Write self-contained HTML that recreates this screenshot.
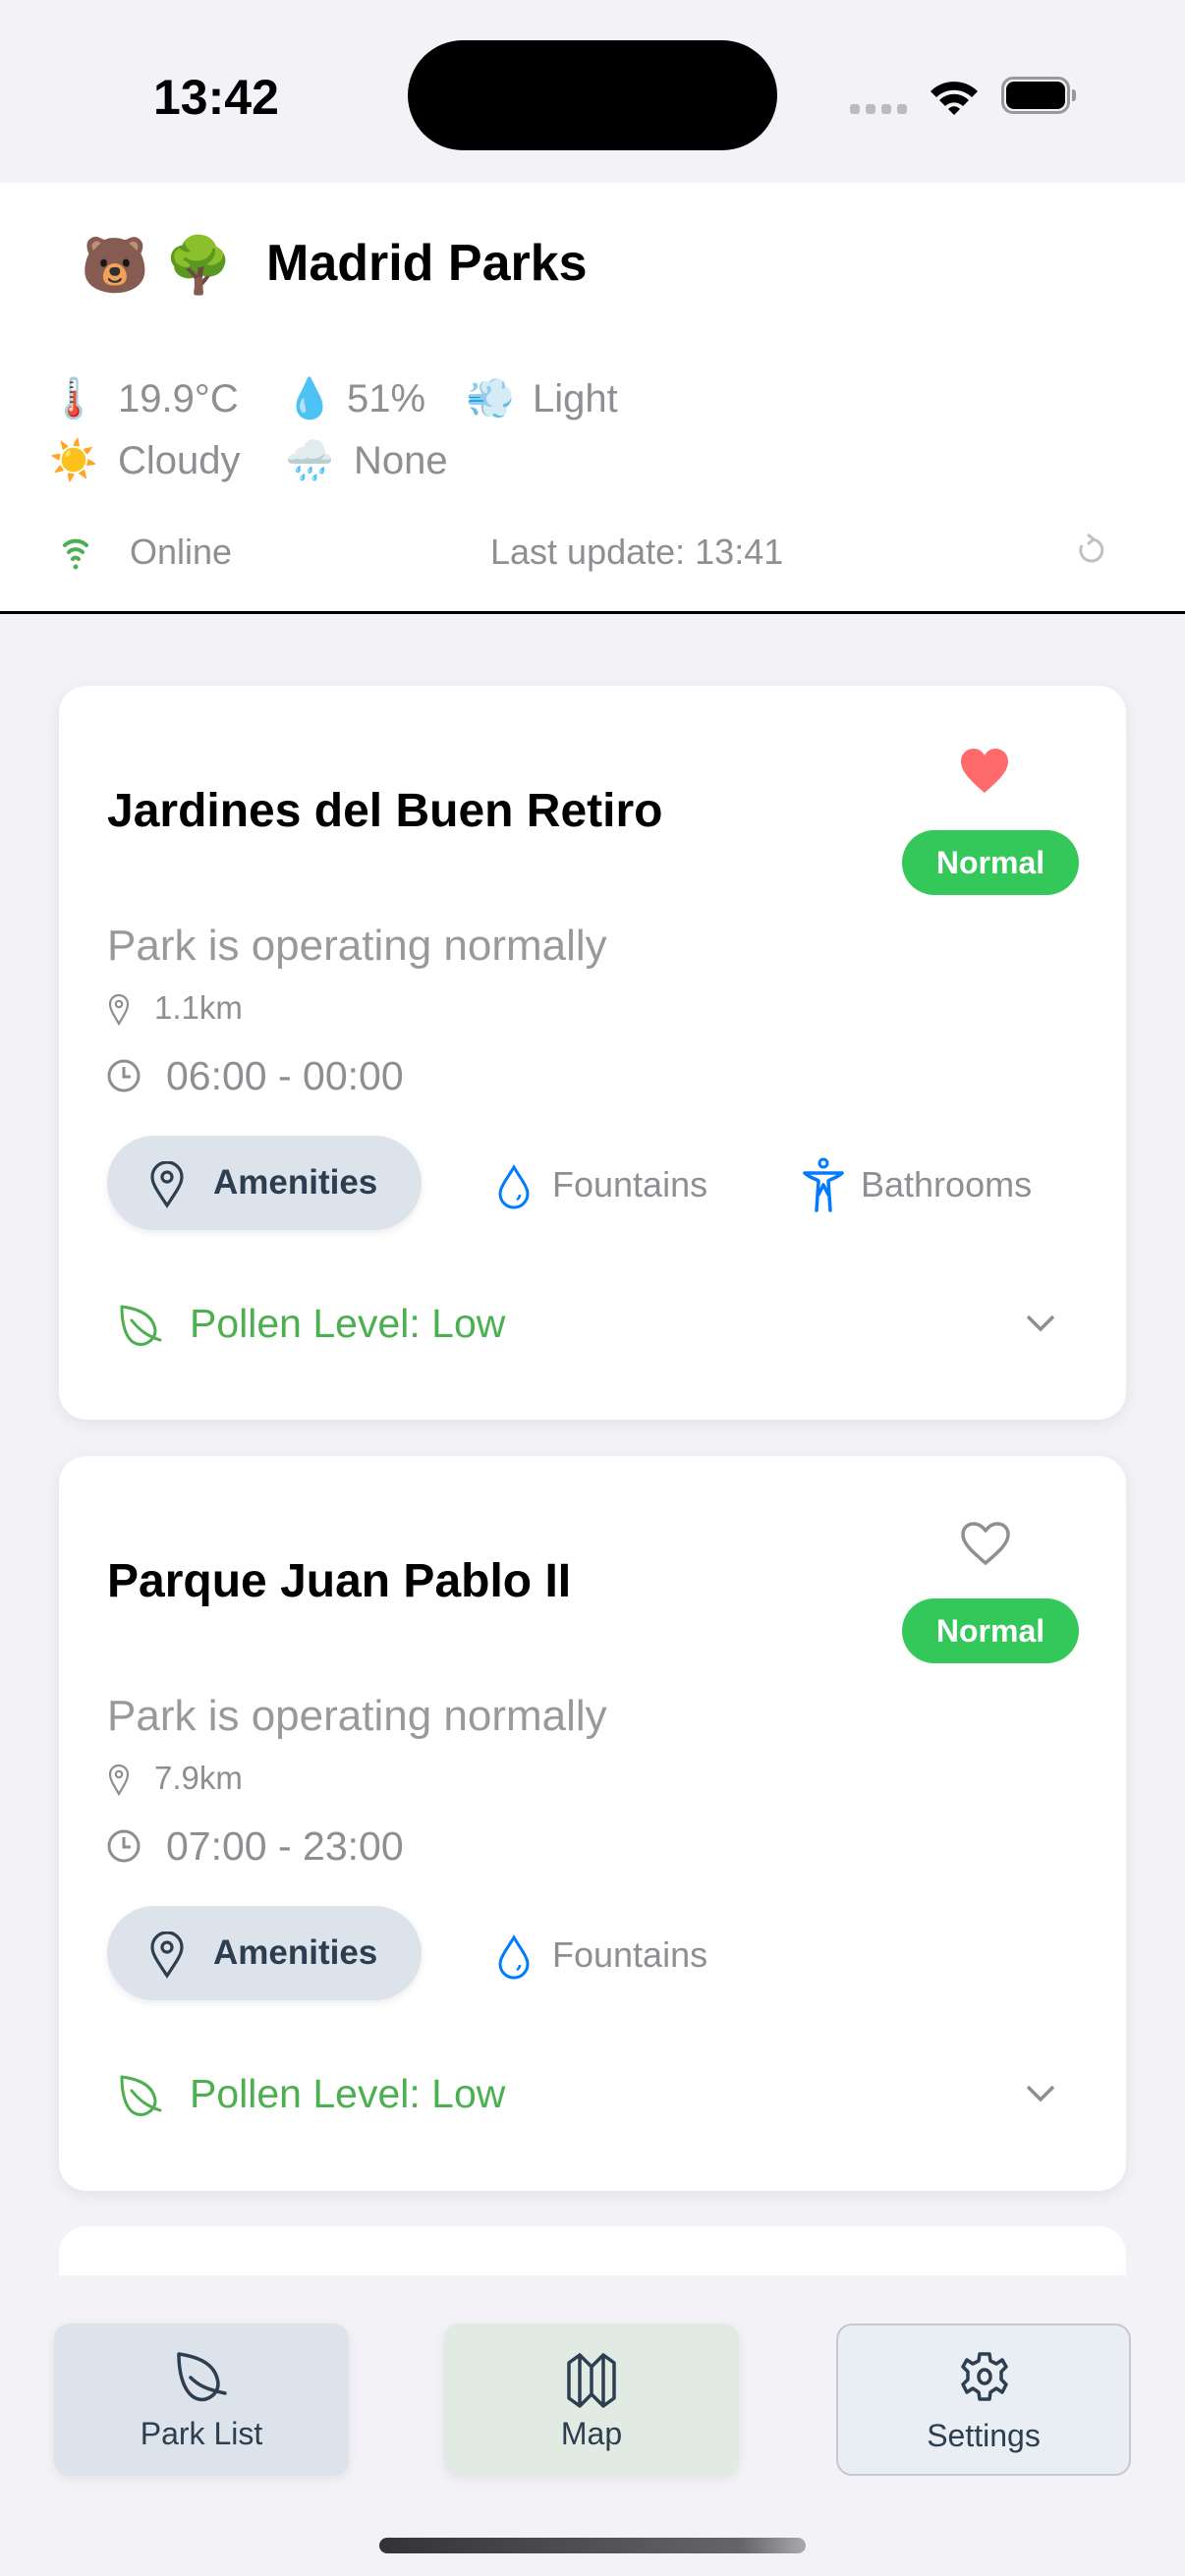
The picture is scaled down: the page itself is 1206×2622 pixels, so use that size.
<!DOCTYPE html>
<html><head><meta charset="utf-8">
<style>
*{margin:0;padding:0;box-sizing:border-box}
body{width:1206px;height:2622px;background:#f2f2f7;font-family:"Liberation Sans","DejaVu Sans",sans-serif;position:relative;overflow:hidden}
.a{position:absolute;white-space:nowrap}
.card{position:absolute;left:60px;width:1086px;background:#fff;border-radius:28px;box-shadow:0 4px 16px rgba(0,0,0,0.07)}
.gray{color:#8e8e93}
.badge{position:absolute;left:858px;width:180px;height:66px;border-radius:33px;background:#34c759;color:#fff;font-weight:bold;font-size:32px;text-align:center;line-height:66px}
.pill{position:absolute;left:49px;width:320px;height:96px;border-radius:48px;background:#dde3ea;box-shadow:0 3px 8px rgba(0,0,0,0.08)}
.tab{position:absolute;top:2365px;width:300px;height:155px;border-radius:16px;box-shadow:0 3px 10px rgba(0,0,0,0.07)}
.tab span{position:absolute;left:0;right:0;top:94px;text-align:center;font-size:32px;color:#2c3e50}
.w{position:absolute;white-space:nowrap;font-size:40px;line-height:48px;color:#8e8e93}
</style></head><body>
<!-- status bar -->
<div class="a" style="left:156px;top:70px;font-size:50px;font-weight:bold;color:#000">13:42</div>
<div class="a" style="left:415px;top:41px;width:376px;height:112px;background:#000;border-radius:56px"></div>
<div class="a" style="left:865px;top:106px;width:10px;height:10px;border-radius:3px;background:#bbb;box-shadow:16px 0 #bbb,32px 0 #bbb,48px 0 #bbb"></div>
<svg class="a" style="left:944px;top:78px" width="54" height="40" viewBox="0 0 54 40"><path d="M3 15 A34 34 0 0 1 51 15 L45 21 A26 26 0 0 0 9 21Z M12 24 A21 21 0 0 1 42 24 L36 30 A13 13 0 0 0 18 30Z M21 33 A8 8 0 0 1 33 33 L27 39Z" fill="#000"/></svg>
<div class="a" style="left:1019px;top:78px;width:70px;height:38px;border:3px solid #999;border-radius:12px"></div>
<div class="a" style="left:1024px;top:83px;width:60px;height:28px;background:#000;border-radius:8px"></div>
<div class="a" style="left:1091px;top:91px;width:4px;height:12px;background:#999;border-radius:0 3px 3px 0"></div>

<!-- header -->
<div class="a" style="left:0;top:186px;width:1206px;height:436px;background:#fff"></div>
<div class="a" style="left:0;top:622px;width:1206px;height:3px;background:#000"></div>
<div class="a" style="left:82px;top:238px;font-size:56px;line-height:64px">🐻 🌳</div>
<div class="a" style="left:271px;top:238px;font-size:52px;font-weight:bold;color:#000;line-height:60px">Madrid Parks</div>
<div class="w" style="left:50px;top:382px">🌡️</div><div class="w" style="left:120px;top:382px">19.9°C</div>
<div class="w" style="left:290px;top:382px">💧</div><div class="w" style="left:353px;top:382px">51%</div>
<div class="w" style="left:474px;top:382px">💨</div><div class="w" style="left:542px;top:382px">Light</div>
<div class="w" style="left:50px;top:445px">☀️</div><div class="w" style="left:120px;top:445px">Cloudy</div>
<div class="w" style="left:290px;top:445px">🌧️</div><div class="w" style="left:360px;top:445px">None</div>
<svg class="a" style="left:64px;top:545px" width="26" height="36" viewBox="0 0 26 36"><g fill="none" stroke="#4caf50" stroke-width="4" stroke-linecap="round"><path d="M2 10 A16 16 0 0 1 24 10"/><path d="M6 17 A10 10 0 0 1 20 17"/><path d="M10 24 A4 4 0 0 1 16 24"/></g><circle cx="13" cy="32" r="2.5" fill="#4caf50"/></svg>
<div class="a gray" style="left:132px;top:541px;font-size:36px">Online</div>
<div class="a gray" style="left:499px;top:541px;font-size:36px">Last update: 13:41</div>
<svg class="a" style="left:1093px;top:541px" width="30" height="40" viewBox="0 0 30 40"><path d="M18 8 A11 11 0 1 1 8 14" fill="none" stroke="#c0c0c4" stroke-width="3"/><path d="M14 3 L20 8 L14 13" fill="none" stroke="#c0c0c4" stroke-width="3"/></svg>

<!-- card 1 -->
<div class="card" style="top:698px;height:747px">
 <div class="a" style="left:49px;top:100px;font-size:48px;font-weight:bold;color:#000">Jardines del Buen Retiro</div>
 <svg class="a" style="left:917px;top:64px" width="50" height="46" viewBox="0 0 50 46"><path d="M25 45 C10 32 1 23 1 13 C1 5 7 0 14 0 C19 0 23 3 25 7 C27 3 31 0 36 0 C43 0 49 5 49 13 C49 23 40 32 25 45Z" fill="#ff6b6b"/></svg>
 <div class="badge" style="top:147px">Normal</div>
 <div class="a gray" style="left:49px;top:240px;font-size:44px;color:#999">Park is operating normally</div>
 <svg class="a" style="left:50px;top:314px" width="22" height="32" viewBox="0 0 22 32"><path d="M11 30 C5 20 2 15 2 10 A9 9 0 0 1 20 10 C20 15 17 20 11 30Z" fill="none" stroke="#8e8e93" stroke-width="2.2"/><circle cx="11" cy="10" r="3.2" fill="none" stroke="#8e8e93" stroke-width="2.2"/></svg>
 <div class="a gray" style="left:97px;top:309px;font-size:33px">1.1km</div>
 <svg class="a" style="left:48px;top:379px" width="36" height="36" viewBox="0 0 36 36"><circle cx="18" cy="18" r="15" fill="none" stroke="#8e8e93" stroke-width="3"/><path d="M18 9 V19 H25" fill="none" stroke="#8e8e93" stroke-width="3"/></svg>
 <div class="a gray" style="left:109px;top:374px;font-size:41px">06:00 - 00:00</div>
 <div class="pill" style="top:458px"></div>
 <svg class="a" style="left:92px;top:484px" width="36" height="48" viewBox="0 0 36 48"><path d="M18 45 C8 30 3 23 3 16 A15 15 0 0 1 33 16 C33 23 28 30 18 45Z" fill="none" stroke="#2c3e50" stroke-width="3.2"/><circle cx="18" cy="16" r="5" fill="none" stroke="#2c3e50" stroke-width="3.2"/></svg>
 <div class="a" style="left:157px;top:486px;font-size:35px;font-weight:bold;color:#2c3e50">Amenities</div>
 <svg class="a" style="left:446px;top:487px" width="34" height="46" viewBox="0 0 34 46"><path d="M17 3 C10 15 3 23 3 30 A14 14 0 0 0 31 30 C31 23 24 15 17 3Z" fill="none" stroke="#007aff" stroke-width="3"/><path d="M20 36 A6 6 0 0 0 23 31" fill="none" stroke="#007aff" stroke-width="2.5"/></svg>
 <div class="a gray" style="left:502px;top:487px;font-size:36px">Fountains</div>
 <svg class="a" style="left:756px;top:480px" width="44" height="56" viewBox="0 0 44 56"><circle cx="22" cy="6" r="4" fill="none" stroke="#007aff" stroke-width="3"/><path d="M3 16 L41 16 M3 16 C10 22 15 22 17 24 L15 54 M41 16 C34 22 29 22 27 24 L29 54 M17 38 L22 28 L27 38" fill="none" stroke="#007aff" stroke-width="3.5" stroke-linecap="round" stroke-linejoin="round"/></svg>
 <div class="a gray" style="left:816px;top:487px;font-size:36px">Bathrooms</div>
 <svg class="a" style="left:60px;top:630px" width="46" height="44" viewBox="0 0 46 44"><path d="M4 2 C20 4 36 10 38 26 C38 36 28 42 20 40 C10 38 4 24 4 2Z M14 16 C22 26 30 32 43 36" fill="none" stroke="#4caf50" stroke-width="3" stroke-linecap="round" stroke-linejoin="round"/></svg>
 <div class="a" style="left:133px;top:626px;font-size:41px;color:#4caf50">Pollen Level: Low</div>
 <svg class="a" style="left:983px;top:638px" width="32" height="22" viewBox="0 0 32 22"><path d="M3 4 L16 17 L29 4" fill="none" stroke="#8e8e93" stroke-width="3.5"/></svg>
</div>

<!-- card 2 -->
<div class="card" style="top:1482px;height:748px">
 <div class="a" style="left:49px;top:100px;font-size:48px;font-weight:bold;color:#000">Parque Juan Pablo II</div>
 <svg class="a" style="left:917px;top:66px" width="52" height="46" viewBox="0 0 52 46"><path d="M26 43 C12 31 3 23 3 14 C3 7 8 3 14 3 C19 3 23 6 26 10 C29 6 33 3 38 3 C44 3 49 7 49 14 C49 23 40 31 26 43Z" fill="none" stroke="#8e8e93" stroke-width="3.5" stroke-linejoin="round"/></svg>
 <div class="badge" style="top:145px">Normal</div>
 <div class="a gray" style="left:49px;top:240px;font-size:44px;color:#999">Park is operating normally</div>
 <svg class="a" style="left:50px;top:314px" width="22" height="32" viewBox="0 0 22 32"><path d="M11 30 C5 20 2 15 2 10 A9 9 0 0 1 20 10 C20 15 17 20 11 30Z" fill="none" stroke="#8e8e93" stroke-width="2.2"/><circle cx="11" cy="10" r="3.2" fill="none" stroke="#8e8e93" stroke-width="2.2"/></svg>
 <div class="a gray" style="left:97px;top:309px;font-size:33px">7.9km</div>
 <svg class="a" style="left:48px;top:379px" width="36" height="36" viewBox="0 0 36 36"><circle cx="18" cy="18" r="15" fill="none" stroke="#8e8e93" stroke-width="3"/><path d="M18 9 V19 H25" fill="none" stroke="#8e8e93" stroke-width="3"/></svg>
 <div class="a gray" style="left:109px;top:374px;font-size:41px">07:00 - 23:00</div>
 <div class="pill" style="top:458px"></div>
 <svg class="a" style="left:92px;top:484px" width="36" height="48" viewBox="0 0 36 48"><path d="M18 45 C8 30 3 23 3 16 A15 15 0 0 1 33 16 C33 23 28 30 18 45Z" fill="none" stroke="#2c3e50" stroke-width="3.2"/><circle cx="18" cy="16" r="5" fill="none" stroke="#2c3e50" stroke-width="3.2"/></svg>
 <div class="a" style="left:157px;top:486px;font-size:35px;font-weight:bold;color:#2c3e50">Amenities</div>
 <svg class="a" style="left:446px;top:487px" width="34" height="46" viewBox="0 0 34 46"><path d="M17 3 C10 15 3 23 3 30 A14 14 0 0 0 31 30 C31 23 24 15 17 3Z" fill="none" stroke="#007aff" stroke-width="3"/><path d="M20 36 A6 6 0 0 0 23 31" fill="none" stroke="#007aff" stroke-width="2.5"/></svg>
 <div class="a gray" style="left:502px;top:487px;font-size:36px">Fountains</div>
 <svg class="a" style="left:60px;top:630px" width="46" height="44" viewBox="0 0 46 44"><path d="M4 2 C20 4 36 10 38 26 C38 36 28 42 20 40 C10 38 4 24 4 2Z M14 16 C22 26 30 32 43 36" fill="none" stroke="#4caf50" stroke-width="3" stroke-linecap="round" stroke-linejoin="round"/></svg>
 <div class="a" style="left:133px;top:626px;font-size:41px;color:#4caf50">Pollen Level: Low</div>
 <svg class="a" style="left:983px;top:638px" width="32" height="22" viewBox="0 0 32 22"><path d="M3 4 L16 17 L29 4" fill="none" stroke="#8e8e93" stroke-width="3.5"/></svg>
</div>

<!-- card 3 clipped -->
<div class="a" style="left:60px;top:2266px;width:1086px;height:50px;background:#fff;border-radius:28px 28px 0 0"></div>

<!-- tab bar -->
<div class="tab" style="left:55px;background:#dce3eb"><svg class="a" style="left:123px;top:29px" width="56" height="54" viewBox="0 0 56 54"><path d="M4 2 C24 5 42 12 44 32 C44 44 32 50 24 48 C12 45 4 28 4 2Z M16 26 C24 34 32 38 51 42" fill="none" stroke="#2c3e50" stroke-width="3.5" stroke-linecap="round" stroke-linejoin="round"/></svg><span>Park List</span></div>
<div class="tab" style="left:452px;background:#e1ebe4"><svg class="a" style="left:120px;top:30px" width="60" height="56" viewBox="0 0 60 56"><path d="M7 10 L18 2 L30 14 L42 2 L53 10 L53 46 L42 54 L30 42 L18 54 L7 46Z M18 2 V54 M30 14 V42 M42 2 V54" fill="none" stroke="#2c3e50" stroke-width="3.5" stroke-linejoin="round"/></svg><span>Map</span></div>
<div class="tab" style="left:851px;background:#e9edf4;border:2px solid #c8c8cc;box-shadow:none"><svg class="a" style="left:120px;top:26px" width="58" height="58" viewBox="0 0 58 58"><path d="M24 3 H34 L35 10 L41 13 L47 9 L51 16 L46 21 L46 29 L51 34 L47 42 L41 38 L35 42 L34 49 H24 L23 42 L17 38 L11 42 L7 34 L12 29 L12 21 L7 16 L11 9 L17 13 L23 10Z" fill="none" stroke="#2c3e50" stroke-width="3.5" stroke-linejoin="round"/><ellipse cx="29" cy="26" rx="6" ry="7" fill="none" stroke="#2c3e50" stroke-width="3.5"/></svg><span>Settings</span></div>

<div class="a" style="left:386px;top:2583px;width:434px;height:16px;border-radius:8px;background:linear-gradient(90deg,#333,#666 85%,#aaa)"></div>
</body></html>
